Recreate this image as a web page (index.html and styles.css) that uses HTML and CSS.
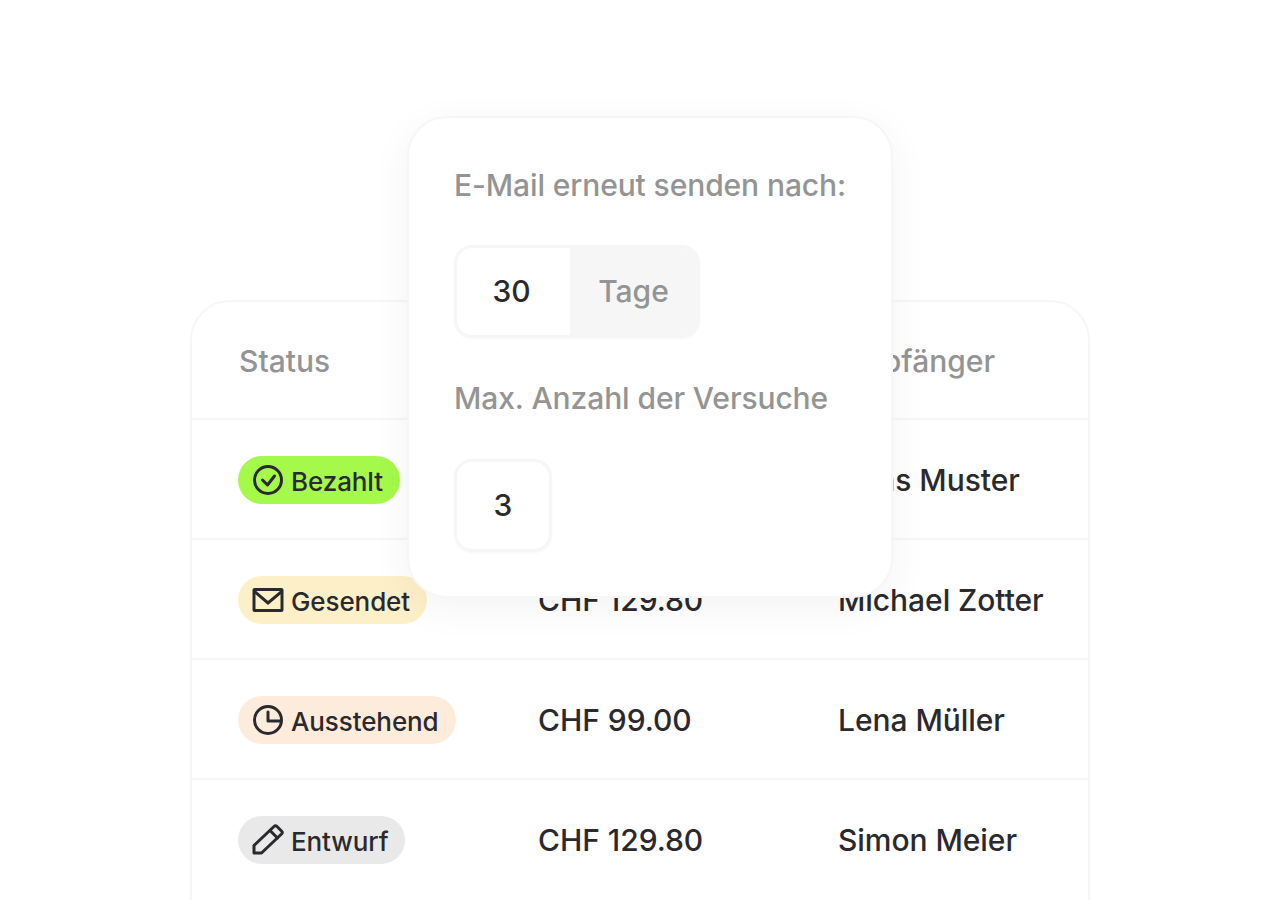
FILE: index.html
```html
<!DOCTYPE html>
<html lang="de">
<head>
    <meta charset="utf-8">
    <title>Rechnungen</title>
    <link rel="stylesheet" href="styles.css">
</head>
<body>
<div class="stage">
    <div class="table-card">
        <div class="row row-head">
            <div>Status</div>
            <div>Betrag</div>
            <div>Empfänger</div>
        </div>
        <div class="row">
            <div><span class="pill pill-paid">
                <svg class="icon" viewBox="0 0 32 32"><circle cx="16" cy="16" r="13.500"/><path d="M10.500 16l5 5 7-9"/></svg>
                <span class="pill-text">Bezahlt</span></span></div>
            <div>CHF 249.50</div>
            <div>Hans Muster</div>
        </div>
        <div class="row">
            <div><span class="pill pill-sent">
                <svg class="icon icon-square" viewBox="0 0 32 32"><rect x="2" y="5.500" width="28" height="21" rx="0.500"/><path d="M3 8l13 11L29 8"/></svg>
                <span class="pill-text">Gesendet</span></span></div>
            <div>CHF 129.80</div>
            <div>Michael Zotter</div>
        </div>
        <div class="row">
            <div><span class="pill pill-pending">
                <svg class="icon" viewBox="0 0 32 32"><circle cx="16" cy="16" r="13.500"/><path d="M16 8v9h13"/></svg>
                <span class="pill-text">Ausstehend</span></span></div>
            <div>CHF 99.00</div>
            <div>Lena Müller</div>
        </div>
        <div class="row">
            <div><span class="pill pill-draft">
                <svg class="icon" viewBox="0 0 32 32"><path d="M2 21.500v7.500h7.500L29.500 10q1.500-1.500 0-3L25 2.500q-1.500-1.500-3 0z"/><path d="M18 6.500l7.500 7.500"/></svg>
                <span class="pill-text">Entwurf</span></span></div>
            <div>CHF 129.80</div>
            <div>Simon Meier</div>
        </div>
    </div>

    <div class="popup">
        <div class="popup-label">E-Mail erneut senden nach:</div>
        <div class="field">
            <div class="field-value field-value-wide">30</div>
            <div class="field-unit">Tage</div>
        </div>
        <div class="popup-label popup-label-second">Max. Anzahl der Versuche</div>
        <div class="field">
            <div class="field-value">3</div>
        </div>
    </div>
</div>
</body>
</html>
```

FILE: styles.css
```css
html, body {
    margin: 0;
    height: 100%;
    overflow: hidden;
    background-color: #fff;
}
body {
    font-family: 'Inter', sans-serif;
    color: #2a2a2e;
}
.stage {
    position: relative;
    height: 900px;
    overflow: hidden;
    padding-top: 300px;
    box-sizing: border-box;
}
.table-card {
    width: 900px;
    height: 800px;
    margin: 0 auto;
    box-sizing: border-box;
    border: 2px solid #f6f6f6;
    border-radius: 40px;
    background-color: #fff;
}
.row {
    display: grid;
    grid-template-columns: 300px 300px 1fr;
    align-items: center;
    height: 120px;
    box-sizing: border-box;
    padding: 2px 0 0 46px;
    border-bottom: 2px solid #f6f6f6;
    font-size: 30px;
    font-weight: 450;
    letter-spacing: -0.05px;
}
.row:last-child {
    border-bottom-color: transparent;
}
.row-head {
    height: 118px;
    color: #949494;
    font-size: 30px;
    font-weight: 500;
    letter-spacing: 0;
}
.row-head > div:first-child {
    padding-left: 1px;
}
.pill {
    display: inline-flex;
    align-items: center;
    gap: 7px;
    height: 48px;
    padding: 0 17px 0 14px;
    border-radius: 24px;
    font-size: 26px;
    letter-spacing: -0.1px;
    vertical-align: middle;
}
.pill-text {
    padding-top: 2px;
}
.pill-paid {
    background-color: #a4f94a;
}
.pill-sent {
    background-color: #fdf0c8;
}
.pill-pending {
    background-color: #fdecdb;
}
.pill-draft {
    background-color: #e9e9e9;
}
.icon {
    width: 32px;
    height: 32px;
    fill: none;
    stroke: #2a2a2e;
    stroke-width: 3;
    stroke-linecap: round;
    stroke-linejoin: round;
}
.icon-square {
    stroke-linecap: square;
    stroke-linejoin: miter;
}
.popup {
    position: absolute;
    left: 407px;
    top: 116px;
    width: 486px;
    height: 482px;
    box-sizing: border-box;
    padding: 46px 45px 0;
    border: 2px solid #f6f6f6;
    border-radius: 40px;
    background-color: #fff;
    box-shadow: 0 10px 40px rgba(0, 0, 0, 0.05);
}
.popup-label {
    height: 40px;
    line-height: 42px;
    color: #949494;
    font-size: 30px;
    font-weight: 500;
    letter-spacing: -0.1px;
    white-space: nowrap;
}
.popup-label-second {
    margin: 39px 0 1px;
}
.field {
    display: inline-flex;
    height: 93px;
    margin-top: 41px;
    box-sizing: border-box;
    border: 3px solid #f6f6f6;
    border-radius: 18px;
    overflow: hidden;
    box-shadow: 0 1px 2px rgba(0, 0, 0, 0.03);
    font-size: 30px;
    font-weight: 450;
}
.field-value {
    display: flex;
    align-items: center;
    justify-content: center;
    width: 92px;
    padding-bottom: 2px;
    box-sizing: border-box;
}
.field-value-wide {
    width: 113px;
    padding-right: 4px;
}
.field-unit {
    display: flex;
    align-items: center;
    justify-content: center;
    width: 127px;
    padding-bottom: 2px;
    box-sizing: border-box;
    background-color: #f6f6f6;
    color: #949494;
}
```
